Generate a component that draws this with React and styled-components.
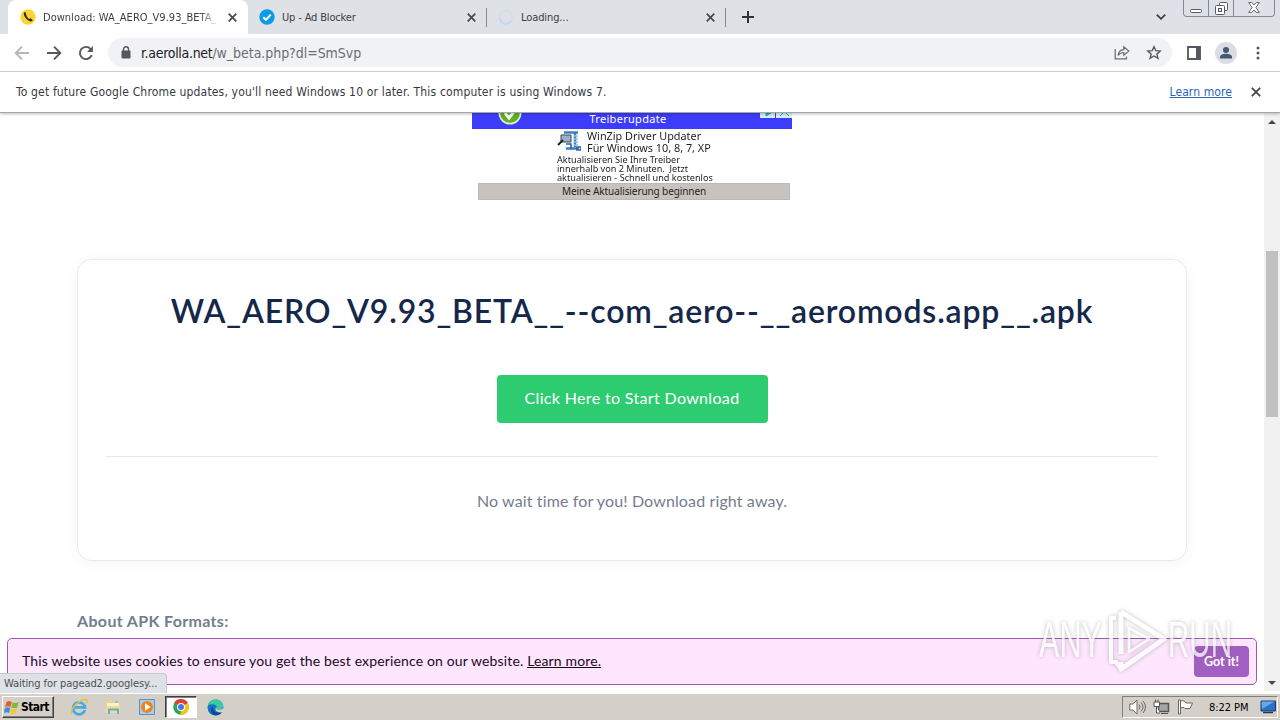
import React from "react";
import styled, { createGlobalStyle, css } from "styled-components";

const tabs = [
    { title: "Download: WA_AERO_V9.93_BETA_", icon: "phone", active: true, spacing: "0.02px" },
    { title: "Up - Ad Blocker", icon: "check", spacing: "-0.15px" },
    { title: "Loading...", icon: "spinner", spacing: "-0.1px" },
];

const App = () => {
    return (
        <Screen>
            <GlobalStyle />
            <TabStrip />
            <Toolbar />
            <InfoBar>
                <InfoText>To get future Google Chrome updates, you'll need Windows 10 or later. This computer is using Windows 7.</InfoText>
                <InfoLink href="#">Learn more</InfoLink>
                <CloseIcon size={10} width={1.8} />
            </InfoBar>
            <Viewport>
                <Page>
                    <Advert />
                    <DownloadCard>
                        <FileName>WA_AERO_V9.93_BETA__--com_aero--__aeromods.app__.apk</FileName>
                        <DownloadButton>Click Here to Start Download</DownloadButton>
                        <Divider />
                        <Note>No wait time for you! Download right away.</Note>
                    </DownloadCard>
                    <SectionTitle>About APK Formats:</SectionTitle>
                </Page>
                <ScrollTrack>
                    <Arrow viewBox="0 0 8 4"><path d="M0 4L4 0l4 4z" /></Arrow>
                    <ScrollThumb />
                    <Arrow viewBox="0 0 8 4"><path d="M0 0l4 4 4-4z" /></Arrow>
                </ScrollTrack>
                <CookieBar>
                    <CookieText>
                        This website uses cookies to ensure you get the best experience on our website. <a href="#">Learn more.</a>
                    </CookieText>
                    <GotIt>Got it!</GotIt>
                </CookieBar>
                <Watermark />
                <StatusBubble>Waiting for pagead2.googlesy...</StatusBubble>
            </Viewport>
            <Taskbar />
        </Screen>
    );
};

export default App;

const CloseIcon = ({ size = 9, width = 1.9 }) => (
    <svg width={size} height={size} viewBox="0 0 10 10" stroke="#45484c" strokeWidth={width}>
        <path d="M.8.8l8.4 8.4M9.2.8L.8 9.2" />
    </svg>
);

const TabIcon = ({ name }) => {
    if (name === "phone") {
        return (
            <svg width="16" height="16" viewBox="0 0 16 16">
                <circle cx="8" cy="8" r="7.7" fill="#fcd535" />
                <path d="M4.3 3.2c-.9 1-.8 3.1 1.3 5.7 2.2 2.7 4.6 4 6.2 3.4l1.1-1-2.2-2-1.5.7C8 9.400 6.800 7.900 6.500 6.600l-.3-1.200L5.500 3z" fill="#352a16" />
            </svg>
        );
    }
    if (name === "check") {
        return (
            <svg width="16" height="16" viewBox="0 0 16 16">
                <circle cx="8" cy="8" r="7.7" fill="#0a9be8" />
                <path d="M4.300 8.200l2.600 2.600 4.900-5.200" fill="none" stroke="#fff" strokeWidth="2" />
            </svg>
        );
    }
    return (
        <svg width="16" height="16" viewBox="0 0 16 16" fill="none" strokeWidth="2">
            <circle cx="8" cy="8" r="6.500" stroke="#d7dee9" />
            <path d="M1.700 9.500a6.500 6.500 0 0 0 11.600 2.400" stroke="#c3d7f5" />
        </svg>
    );
};

const TabStrip = () => (
    <Strip>
        {tabs.map((tab) => (
            <Tab key={tab.title} $active={tab.active}>
                <TabIcon name={tab.icon} />
                <TabTitle $fade={tab.active} $spacing={tab.spacing}>{tab.title}</TabTitle>
                <CloseIcon />
            </Tab>
        ))}
        <NewTab width="12" height="12" viewBox="0 0 12 12" stroke="#303337" strokeWidth="2">
            <path d="M6 0v12M0 6h12" />
        </NewTab>
        <TabSearch width="10" height="6" viewBox="0 0 10 6" fill="none" stroke="#3c4043" strokeWidth="1.8">
            <path d="M.8.7L5 4.800 9.200.7" />
        </TabSearch>
        <WindowButtons>
            <WindowButton $width={24} $lift={3}>
                <svg width="12" height="4" viewBox="0 0 12 4"><rect x=".5" y=".5" width="11" height="3" rx="1" fill="#fff" stroke="#555b64" /></svg>
            </WindowButton>
            <WindowButton $width={25} $lift={1}>
                <svg width="13" height="13" viewBox="0 0 13 13" fill="#fff" stroke="#555b64">
                    <rect x="4.500" y=".5" width="8" height="8" rx="1" />
                    <rect x=".5" y="3.500" width="9" height="9" rx="1" />
                    <rect x="3.500" y="6.500" width="3" height="3" fill="#dee1e6" />
                </svg>
            </WindowButton>
            <WindowButton $width={41} $lift={3}>
                <svg width="12" height="11" viewBox="0 0 12 11" fill="#fff" stroke="#6b7078">
                    <path d="M.6.5h3.200L6 3 8.200.5h3.200L7.900 5.500l3.500 5H8.200L6 8l-2.200 2.500H.6l3.500-5z" />
                </svg>
            </WindowButton>
        </WindowButtons>
    </Strip>
);

const Toolbar = () => (
    <Bar>
        <NavIcons>
            <svg width="16" height="16" viewBox="0 0 16 16" fill="none" stroke="#b4b6b9" strokeWidth="1.900">
                <path d="M15 8H2M8 1.700L1.700 8 8 14.300" />
            </svg>
            <svg width="16" height="16" viewBox="0 0 16 16" fill="none" stroke="#55585c" strokeWidth="1.900">
                <path d="M1 8h13M8 1.700L14.300 8 8 14.300" />
            </svg>
            <svg width="16" height="16" viewBox="0 0 16 16" fill="none" stroke="#55585c" strokeWidth="1.900">
                <path d="M13.700 10.200A6.100 6.100 0 1 1 12.600 4l1.400 1.500" />
                <path d="M14.900 1v6H9z" fill="#55585c" stroke="none" />
            </svg>
        </NavIcons>
        <Omnibox>
            <svg width="10" height="13" viewBox="0 0 10 13">
                <rect x=".5" y="4.500" width="9" height="8" rx="1" fill="#54575b" />
                <path d="M2.500 5V3.300a2.500 2.500 0 0 1 5 0V5" fill="none" stroke="#54575b" strokeWidth="1.400" />
            </svg>
            <Url>r.aerolla.net<span>/w_beta.php?dl=SmSvp</span></Url>
            <svg width="16" height="15" viewBox="0 0 16 15" fill="none" stroke="#696c70" strokeWidth="1.200">
                <path d="M1.200 4v9.900h11.300v-2.500" />
                <path d="M4 10.500c.5-4 2.600-5.800 5.800-5.900V1.800L14.800 6l-5 4.200V7.500C7.300 7.500 5.600 8.300 4 10.500z" />
            </svg>
            <svg width="16" height="15" viewBox="0 0 16 15" fill="none" stroke="#55585c" strokeWidth="1.400">
                <path d="M8 1.700l1.800 4 4.400.4-3.300 2.900 1 4.300L8 11l-3.900 2.300 1-4.300-3.300-2.900 4.400-.4z" />
            </svg>
        </Omnibox>
        <BarIcons>
            <svg width="14" height="14" viewBox="0 0 14 14">
                <path d="M1 1h12v12H1z" fill="none" stroke="#55585c" strokeWidth="1.800" />
                <path d="M9 1h4.500v12H9z" fill="#55585c" />
            </svg>
            <svg width="22" height="22" viewBox="0 0 22 22">
                <circle cx="11" cy="11" r="11" fill="#dadde3" />
                <circle cx="11" cy="8" r="3" fill="#485776" />
                <path d="M5 16.500v-1.500c0-2.200 3-3.300 6-3.300s6 1.100 6 3.300v1.500z" fill="#485776" />
            </svg>
            <svg width="4" height="14" viewBox="0 0 4 14" fill="#55585c">
                <circle cx="2" cy="2" r="1.500" /><circle cx="2" cy="7" r="1.500" /><circle cx="2" cy="12" r="1.500" />
            </svg>
        </BarIcons>
    </Bar>
);

const Advert = () => (
    <Ad>
        <AdHeader>
            <AdCheck width="24" height="12" viewBox="0 0 24 12">
                <circle cx="12" cy="0" r="11.500" fill="#d9efc4" />
                <circle cx="12" cy="0" r="9.800" fill="#62ae22" />
                <path d="M7 0l4 5 7-9" fill="none" stroke="#fff" strokeWidth="3" />
            </AdCheck>
            Treiberupdate
            <AdChoices width="32" height="5" viewBox="0 0 32 5">
                <path d="M0 0h15v5H0zM16 0h16v5H16z" fill="#d8f0f5" />
                <path d="M6 0l5 0-5 3zM20 3l3-3M29 3l-3-3" fill="#22a8bd" stroke="#22a8bd" />
            </AdChoices>
        </AdHeader>
        <AdBody>
            <AdTop>
                <svg width="24" height="20" viewBox="0 0 24 20">
                    <path d="M7 1.500h14M9 17.500h13M18 2v14" stroke="#3e7fb8" strokeWidth="2.500" />
                    <path d="M17 5h4M17 8h4M17 11h4M17 14h4" stroke="#8fc1e6" strokeWidth="1.500" />
                    <path d="M4 4h10v7H4z" fill="#9fb0c4" stroke="#34495f" />
                    <path d="M6 9L1 14" stroke="#222" strokeWidth="2" />
                    <path d="M9 13h5v5M20 16h4v3h-4z" fill="none" stroke="#2a64a3" strokeWidth="1.600" />
                </svg>
                <AdTitle>WinZip Driver Updater<br />Für Windows 10, 8, 7, XP</AdTitle>
            </AdTop>
            <AdText>
                <div>Aktualisieren Sie Ihre Treiber</div>
                <div>innerhalb von 2 Minuten.&nbsp; Jetzt</div>
                <div>aktualisieren - Schnell und kostenlos</div>
            </AdText>
        </AdBody>
        <AdButton>Meine Aktualisierung beginnen</AdButton>
    </Ad>
);

const Watermark = () => (
    <Mark width="200" height="74" viewBox="0 0 200 74">
        <g fill="none" stroke="#fff" strokeLinejoin="round">
            <path d="M87 8l43 27-43 30v-7M87 8v42" strokeWidth="5" />
            <path d="M95 24v24l20-13z" strokeWidth="2.500" />
            <path d="M82 14h-5v44h5l5 7" strokeWidth="4" />
        </g>
        <MarkText x="5" y="53" textLength="63" lengthAdjust="spacingAndGlyphs">ANY</MarkText>
        <MarkText x="134" y="53" textLength="64" lengthAdjust="spacingAndGlyphs">RUN</MarkText>
    </Mark>
);

const Taskbar = () => (
    <TaskRow>
        <StartButton>
            <svg width="16" height="15" viewBox="0 0 16 15">
                <path d="M2.500 2C4.500.7 6 .9 7.700 1.900L6.500 7C4.800 6 3.200 6 1 7z" fill="#ea5a2a" />
                <path d="M8.500 2.300c1.800 1 3.800 1 6.200-.3L13.300 7.200c-2 1.100-4 1.100-5.900.2z" fill="#7dbb35" />
                <path d="M.9 8c2.100-1 3.700-1 5.400 0L5 13C3.500 12 1.900 12-.1 13z" fill="#3f8ddd" />
                <path d="M7.200 8.400c1.800.9 3.800.9 5.800-.1l-1.400 5c-1.900 1-3.900 1-5.700.1z" fill="#f7c62e" />
            </svg>
            Start
        </StartButton>
        <TaskItem>
            <svg width="18" height="18" viewBox="0 0 18 18" fill="none">
                <path d="M14.800 12.200A6 6 0 1 1 15 9.300H4.500" stroke="#43aae4" strokeWidth="2.700" />
                <path d="M1.500 16C-.5 12 8 2 16 1.300c2 .5 1 3.200.3 4.200" stroke="#edbe3c" strokeWidth="1.400" />
            </svg>
        </TaskItem>
        <TaskItem>
            <svg width="16" height="16" viewBox="0 0 16 16">
                <path d="M1 2h5l1 1.500h7V14H1z" fill="#edd37b" />
                <path d="M2 4h12v4H2z" fill="#fff3bd" />
                <path d="M1 7h14v7H1z" fill="#f2dc8e" />
                <path d="M4 15v-4.500h9V15" fill="none" stroke="#5aafe0" strokeWidth="2" />
                <path d="M10 3h3" stroke="#5aafe0" />
            </svg>
        </TaskItem>
        <TaskItem>
            <svg width="16" height="16" viewBox="0 0 16 16">
                <path d="M.5.5h15v15H.5z" fill="#a9cdec" stroke="#5591c6" />
                <circle cx="8" cy="8" r="6" fill="#f18416" />
                <path d="M6 4.300v7.400L11.700 8z" fill="#fff" />
            </svg>
        </TaskItem>
        <TaskItem $active>
            <svg width="16" height="16" viewBox="0 0 16 16">
                <circle cx="8" cy="8" r="7.800" fill="#32a350" />
                <path d="M8 8L1.200 4.100A7.800 7.800 0 0 1 14.800 4.100z" fill="#e23e32" />
                <path d="M8 8l6.800-3.900A7.800 7.800 0 0 1 8 15.800L7.500 15z" fill="#fbc516" />
                <circle cx="8" cy="8" r="4" fill="#fff" />
                <circle cx="8" cy="8" r="3" fill="#3c7ced" />
            </svg>
        </TaskItem>
        <TaskItem>
            <svg width="17" height="17" viewBox="0 0 17 17">
                <circle cx="8.500" cy="8.500" r="8" fill="#1474c4" />
                <path d="M1 6.500C2.500.5 10-1.200 14 2.600c3.200 3 3 7.700-1.400 8.200-3 .2-3.600-1-2.800-2.200C10.500 6 6 3.500 1 6.500z" fill="#3bc8a4" />
                <path d="M6.200 7.500c-.8 4.500 3 7.300 8.300 5.700-2 3-5 3.500-7 3C3.500 15 2.700 10 6.200 7.500z" fill="#114a8d" />
                <path d="M9.800 8.600c-.8 1.200-.2 2.400 2.800 2.200 1.500-.1 2.900-.8 3.700-1.800L17 13l-2.500.3C11 13.800 8 12 8.500 9z" fill="#d4d0c8" />
            </svg>
        </TaskItem>
        <Tray>
            <svg width="17" height="16" viewBox="0 0 17 16" fill="none" stroke="#686868">
                <path d="M.8 5h3L8 1v14l-4.200-4h-3z" fill="#fff" />
                <path d="M10 5.500q2 2.500 0 5M12 3.500q4 4.500 0 9M14 2q5 6 0 12" />
            </svg>
            <svg width="17" height="16" viewBox="0 0 17 16" fill="#fff" stroke="#555">
                <path d="M5.500 4.500h10v8h-10z" fill="#a5a5a5" strokeWidth="1.500" />
                <path d="M8 14.500h7M3.500 8v6H7" />
                <path d="M1 3h5.500v4.500H1zM2.500 3V.5M5 3V.5" />
            </svg>
            <svg width="17" height="16" viewBox="0 0 17 16" fill="#fff" stroke="#666">
                <path d="M1.500 1h2v14h-2zM3.500 2C7 1 8 2.500 9 4h6.500L13 9.500H8C7 8 5.500 8 3.500 9z" />
            </svg>
            <Clock>8:22 PM</Clock>
            <svg width="16" height="14" viewBox="0 0 16 14">
                <path d="M1 1h14.500v10H1z" fill="#2871c7" stroke="#173e7b" />
                <path d="M1.500 1.500h13L2 9z" fill="#69a8e8" />
                <path d="M3 12.500h10" stroke="#2a3442" strokeWidth="1.500" />
            </svg>
        </Tray>
    </TaskRow>
);

const uiFont = `"DejaVu Sans Condensed", "DejaVu Sans", sans-serif`;
const pageFont = `Lato, "Open Sans", sans-serif`;

const GlobalStyle = createGlobalStyle`
    * {
        box-sizing: border-box;
    }

    body {
        margin: 0;
        overflow: hidden;
    }

    svg {
        display: block;
        flex-shrink: 0;
    }
`
const Screen = styled.div`
    display: flex;
    flex-direction: column;
    width: 1280px;
    height: 720px;
    overflow: hidden;
    background: #fff;
    font-family: ${uiFont};
`
const Strip = styled.div`
    display: flex;
    align-items: center;
    height: 34px;
    padding: 0 5px 0 8px;
    background: #dee1e6;
`
const Tab = styled.div`
    display: flex;
    align-items: center;
    width: 240px;
    height: 34px;
    margin-right: -1px;
    padding: 0 11px 0 12px;
    background: linear-gradient(#868b90, #868b90) right center / 1px 19px no-repeat;

    ${({ $active }) => $active && css`
        border-radius: 8px 8px 0 0;
        background: #fff;
    `}
`
const TabTitle = styled.div`
    flex: 1;
    margin: 0 8px 0 7px;
    overflow: hidden;
    white-space: nowrap;
    font-size: 11px;
    letter-spacing: ${({ $spacing }) => $spacing};
    color: #3b3e42;
    ${({ $fade }) => $fade && "mask-image: linear-gradient(90deg, #000 88%, transparent);"}
`
const NewTab = styled.svg`
    margin-left: 17px;
`
const TabSearch = styled.svg`
    margin-left: auto;
`
const WindowButtons = styled.div`
    display: flex;
    align-self: flex-start;
    height: 17px;
    margin-left: 17px;
    border: 1px solid #858a92;
    border-top: 0;
    border-radius: 0 0 4px 4px;
`
const WindowButton = styled.div`
    display: flex;
    align-items: flex-end;
    justify-content: center;
    width: ${({ $width }) => $width}px;
    padding-bottom: ${({ $lift }) => $lift}px;

    & + & {
        border-left: 1px solid #858a92;
    }
`
const Bar = styled.div`
    display: flex;
    align-items: center;
    height: 38px;
    padding: 0 20px 0 14px;
    border-bottom: 1px solid #d5d7da;
`
const NavIcons = styled.div`
    display: flex;
    gap: 16px;
    margin-right: 14px;
`
const Omnibox = styled.div`
    display: flex;
    align-items: center;
    flex: 1;
    height: 29px;
    padding: 0 10px 0 13px;
    border-radius: 15px;
    background: #f0f2f5;

    svg + svg {
        margin-left: 16px;
    }
`
const Url = styled.div`
    flex: 1;
    margin-left: 10px;
    font-size: 14px;
    letter-spacing: -0.3px;
    color: #202124;

    span {
        letter-spacing: -0.05px;
        color: #6b6e73;
    }
`
const BarIcons = styled.div`
    display: flex;
    align-items: center;
    gap: 14px;
    margin-left: 15px;

    svg:last-child {
        margin-left: 5px;
    }
`
const InfoBar = styled.div`
    display: flex;
    align-items: center;
    position: relative;
    z-index: 1;
    height: 41px;
    padding: 0 19px 0 16px;
    background: #fff;
    border-bottom: 1px solid #a6a6a6;
    box-shadow: 0 1px 3px rgba(0,0,0,.25);
`
const InfoText = styled.div`
    flex: 1;
    font-size: 12px;
    letter-spacing: 0.165px;
    color: #36393d;
`
const InfoLink = styled.a`
    margin-right: 19px;
    font-size: 12px;
    letter-spacing: 0.1px;
    color: #2a66b5;
`
const Viewport = styled.div`
    display: flex;
    position: relative;
    flex: 1;
`
const Page = styled.div`
    flex: 1;
    height: 579px;
    padding: 0 77px;
    overflow: hidden;
    font-family: ${pageFont};
`
const Ad = styled.div`
    width: 320px;
    height: 87px;
    margin: 0 auto 59px;
    font-family: "Noto Sans", sans-serif;
    color: #1e1e1e;
`
const AdHeader = styled.div`
    position: relative;
    height: 16px;
    padding-right: 8px;
    background: #3d3cfb;
    text-align: center;
    font-size: 11px;
    line-height: 12px;
    letter-spacing: 0.3px;
    color: #fff;
`
const AdCheck = styled.svg`
    position: absolute;
    top: 0;
    left: 26px;
`
const AdChoices = styled.svg`
    position: absolute;
    top: 0;
    right: 0;
`
const AdBody = styled.div`
    height: 54px;
    padding: 2px 0 0 85px;
    white-space: nowrap;
`
const AdTop = styled.div`
    display: flex;
    gap: 6px;
    height: 24px;
`
const AdTitle = styled.div`
    margin-top: -1px;
    font-size: 10px;
    line-height: 12px;
    transform: scaleX(1.085);
    transform-origin: left;
`
const AdText = styled.div`
    width: 160px;
    font-size: 8px;
    line-height: 9px;
    transform: scaleX(1.14);
    transform-origin: left;
`
const AdButton = styled.div`
    width: 312px;
    height: 17px;
    margin-left: 6px;
    border: 1px solid #bdb8b5;
    background: #c9c3bf;
    text-align: center;
    font-size: 10px;
    line-height: 14px;
    letter-spacing: -0.1px;
`
const DownloadCard = styled.div`
    display: flex;
    flex-direction: column;
    align-items: center;
    height: 302px;
    padding: 28px;
    border: 1px solid #e9eaec;
    border-radius: 14px;
    box-shadow: 0 2px 16px rgba(0,0,0,.045);
`
const FileName = styled.h1`
    margin: 0;
    font-size: 32px;
    font-weight: 600;
    line-height: 46px;
    letter-spacing: 0.83px;
    white-space: nowrap;
    color: #15284b;
`
const DownloadButton = styled.button`
    width: 271px;
    height: 48px;
    margin-top: 41px;
    padding-bottom: 4px;
    border: 0;
    border-radius: 4px;
    background: #2ecc71;
    font-family: inherit;
    font-size: 16px;
    letter-spacing: 0.34px;
    color: #fff;
`
const Divider = styled.hr`
    width: 1052px;
    margin: 33px 0 31px;
    border: 0;
    border-top: 1px solid #e6e8ea;
`
const Note = styled.p`
    margin: 0;
    font-size: 16px;
    line-height: 26px;
    letter-spacing: 0.13px;
    color: #737d8f;
`
const SectionTitle = styled.h2`
    margin: 47px 0 0;
    font-size: 16px;
    font-weight: 700;
    line-height: 26px;
    letter-spacing: 0.34px;
    color: #737d8f;
`
const ScrollTrack = styled.div`
    display: flex;
    flex-direction: column;
    align-items: center;
    justify-content: space-between;
    width: 16px;
    height: 578px;
    padding: 7px 0 6px;
    background: #f1f1f1;
`
const Arrow = styled.svg`
    width: 8px;
    height: 4px;
    fill: #45484b;
`
const ScrollThumb = styled.div`
    width: 12px;
    height: 166px;
    margin-bottom: 137px;
    background: #c1c1c1;
`
const CookieBar = styled.div`
    display: flex;
    align-items: center;
    justify-content: space-between;
    position: absolute;
    left: 7px;
    bottom: 8px;
    width: 1250px;
    height: 47px;
    padding: 0 7px 0 14px;
    border: 1px solid #9b5ab0;
    border-radius: 5px;
    background: #fee6ff;
    font-family: ${pageFont};
`
const CookieText = styled.div`
    padding-bottom: 2px;
    font-size: 14px;
    letter-spacing: 0.14px;
    color: #1a0a1e;

    a {
        color: inherit;
    }
`
const GotIt = styled.button`
    width: 55px;
    height: 31px;
    padding: 0;
    border: 0;
    border-radius: 4px;
    background: #a25fc2;
    font-family: inherit;
    font-size: 12.500px;
    font-weight: 700;
    color: #fff;
`
const Mark = styled.svg`
    position: absolute;
    left: 1034px;
    top: 491px;
    opacity: .75;
    filter: drop-shadow(0 0 2px rgba(90,85,90,.5));
`
const MarkText = styled.text`
    font-family: "Liberation Sans", sans-serif;
    font-size: 50px;
    fill: #fff;
`
const StatusBubble = styled.div`
    position: absolute;
    left: 0;
    bottom: 0;
    width: 167px;
    height: 20px;
    padding-left: 4px;
    border: 1px solid #c5c9ce;
    border-width: 1px 1px 0 0;
    border-radius: 0 4px 0 0;
    background: #dee1e6;
    font-size: 11px;
    line-height: 19px;
    letter-spacing: -0.08px;
    white-space: nowrap;
    color: #4c5054;
`
const TaskRow = styled.div`
    display: flex;
    align-items: center;
    height: 27px;
    padding-left: 2px;
    border-top: 1px solid #fff;
    background: #d4d0c8;
`
const StartButton = styled.div`
    display: flex;
    align-items: center;
    gap: 1px;
    width: 52px;
    height: 22px;
    margin-right: 9px;
    padding-left: 1px;
    border: 1px solid;
    border-color: #fff #404040 #404040 #fff;
    box-shadow: inset -1px -1px #808080;
    font-size: 12px;
    font-weight: 700;
    letter-spacing: -0.55px;
    color: #000;
`
const TaskItem = styled.div`
    display: flex;
    align-items: center;
    justify-content: center;
    width: 32px;
    height: 22px;
    margin-right: 2px;

    ${({ $active }) => $active && css`
        border: 1px solid;
        border-color: #404040 #fff #fff #404040;
        box-shadow: inset 1px 1px #808080;
        background: #fff;
    `}
`
const Tray = styled.div`
    display: flex;
    align-items: center;
    gap: 7px;
    width: 156px;
    height: 22px;
    margin: 0 2px 0 auto;
    padding-left: 6px;
    border: 1px solid;
    border-color: #808080 #fff #fff #808080;
`
const Clock = styled.div`
    width: 44px;
    margin-left: 8px;
    font-size: 11px;
    letter-spacing: -0.05px;
    white-space: nowrap;
    color: #000;
`
